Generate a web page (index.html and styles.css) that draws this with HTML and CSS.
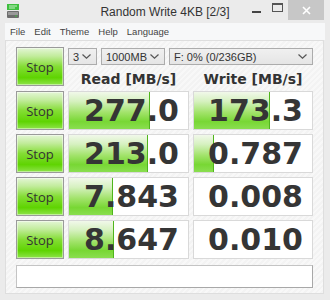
FILE: index.html
```html
<!DOCTYPE html>
<html lang="en">
<head>
    <meta charset="UTF-8">
    <title>Random Write 4KB [2/3]</title>
    <link rel="stylesheet" href="styles.css">
</head>
<body>

    <div class="window">
        <!-- Title Bar -->
        <div class="titlebar">
            <div class="title-left">
                <svg class="app-icon" width="12" height="14" viewBox="0 0 12 14">
                    <rect x="0" y="0" width="12" height="6" fill="#3fbf3f"/>
                    <rect x="2" y="1.5" width="8" height="1" fill="#c8f0c8"/>
                    <rect x="2" y="3.5" width="6" height="1" fill="#c8f0c8"/>
                    <rect x="0" y="7" width="12" height="7" rx="1" fill="#6e6e6e"/>
                    <rect x="1" y="8" width="10" height="3" fill="#9a9a9a"/>
                    <rect x="8" y="11.5" width="2" height="1" fill="#3fbf3f"/>
                </svg>
            </div>
            <div class="title">Random Write 4KB [2/3]</div>
            <div class="caption-buttons">
                <span class="cap-btn cap-min"><span class="min-bar"></span></span>
                <span class="cap-btn cap-max"><span class="max-box"></span></span>
                <span class="cap-btn cap-close">
                    <svg width="9" height="9" viewBox="0 0 9 9">
                        <path d="M1 1 L8 8 M8 1 L1 8" stroke="#fff" stroke-width="1.6"/>
                    </svg>
                </span>
            </div>
        </div>

        <!-- Menu -->
        <div class="menubar">
            <span>File</span>
            <span>Edit</span>
            <span>Theme</span>
            <span>Help</span>
            <span>Language</span>
        </div>

        <!-- Main Area -->
        <div class="client">
            <div class="top">
                <button class="stop stop-all">Stop</button>
                <div class="controls">
                    <div class="combos">
                        <div class="combo combo-count"><span>3</span><svg class="chev" width="9" height="5" viewBox="0 0 9 5"><polyline points="0.5,0.5 4.5,4.2 8.5,0.5" fill="none" stroke="#555" stroke-width="1.2"/></svg></div>
                        <div class="combo combo-size"><span>1000MB</span><svg class="chev" width="9" height="5" viewBox="0 0 9 5"><polyline points="0.5,0.5 4.5,4.2 8.5,0.5" fill="none" stroke="#555" stroke-width="1.2"/></svg></div>
                        <div class="combo combo-drive"><span>F: 0% (0/236GB)</span><svg class="chev" width="9" height="5" viewBox="0 0 9 5"><polyline points="0.5,0.5 4.5,4.2 8.5,0.5" fill="none" stroke="#555" stroke-width="1.2"/></svg></div>
                    </div>
                    <div class="headers">
                        <div class="head head-read">Read [MB/s]</div>
                        <div class="head head-write">Write [MB/s]</div>
                    </div>
                </div>
            </div>

            <div class="rows">
                <div class="row">
                    <button class="stop">Stop</button>
                    <div class="cell cell-read"><div class="fill" style="width: 68%"></div><span class="val">277.0</span></div>
                    <div class="cell cell-write"><div class="fill" style="width: 64%"></div><span class="val">173.3</span></div>
                </div>
                <div class="row">
                    <button class="stop">Stop</button>
                    <div class="cell cell-read"><div class="fill" style="width: 66%"></div><span class="val">213.0</span></div>
                    <div class="cell cell-write"><div class="fill" style="width: 17%"></div><span class="val">0.787</span></div>
                </div>
                <div class="row">
                    <button class="stop">Stop</button>
                    <div class="cell cell-read"><div class="fill" style="width: 37%"></div><span class="val">7.843</span></div>
                    <div class="cell cell-write"><span class="val">0.008</span></div>
                </div>
                <div class="row">
                    <button class="stop">Stop</button>
                    <div class="cell cell-read"><div class="fill" style="width: 38%"></div><span class="val">8.647</span></div>
                    <div class="cell cell-write"><span class="val">0.010</span></div>
                </div>
            </div>

            <div class="comment"></div>
        </div>
    </div>

</body>
</html>
```

FILE: styles.css
```css
/* Common Styles */
body {
    margin: 0;
    background-color: #ebebeb;
    font-family: 'Liberation Sans', Arial, sans-serif;
    color: #333;
}

.window {
    width: 330px;
    height: 300px;
    display: flex;
    flex-direction: column;
}

/* Title Bar */
.titlebar {
    height: 23px;
    display: grid;
    grid-template-columns: 1fr auto 1fr;
    align-items: start;
}

.title-left {
    padding: 4px 0 0 7px;
}

.app-icon {
    display: block;
}

.title {
    font-size: 12px;
    line-height: 24px;
    color: #333;
}

.caption-buttons {
    display: flex;
    justify-content: flex-end;
    padding-right: 6px;
}

.cap-btn {
    height: 20px;
    display: flex;
    align-items: center;
    justify-content: center;
}

.cap-min {
    width: 22px;
}

.min-bar {
    width: 9px;
    height: 2px;
    background-color: #444;
    margin-top: 4px;
}

.cap-max {
    width: 21px;
}

.max-box {
    width: 9px;
    height: 6px;
    border: 1px solid #555;
    border-top-width: 2px;
    margin-top: -6px;
}

.cap-close {
    width: 36px;
    background-color: #c7c7c7;
}

/* Menu Bar */
.menubar {
    height: 17px;
    margin: 0 5px;
    padding-left: 5px;
    background-color: #f7f8f9;
    display: flex;
    gap: 9px;
    font-size: 9.5px;
    line-height: 18px;
    color: #444;
}

/* Client Area */
.client {
    height: 246px;
    margin: 0 6px 0 5px;
    padding: 6px 10px 0 10px;
    border: 1px solid #dedede;
    background: repeating-linear-gradient(135deg, #f3f3f3 0 2px, #f8f8f8 2px 4px);
}

.top {
    display: flex;
    gap: 4px;
}

.controls {
    width: 245px;
}

.combos {
    display: flex;
    gap: 4px;
    margin-top: 1px;
}

.combo {
    height: 17px;
    box-sizing: border-box;
    border: 1px solid #acacac;
    background: linear-gradient(to bottom, #f0f0f0, #e5e5e5);
    display: flex;
    align-items: center;
    justify-content: space-between;
    padding: 0 5px 0 4px;
    font-size: 11px;
    color: #333;
}

.combo-count {
    width: 29px;
}

.combo-size {
    width: 64px;
}

.combo-drive {
    width: 144px;
}

.chev {
    display: block;
}

.headers {
    display: flex;
    gap: 4px;
    padding-top: 6px;
}

.head {
    font-family: 'DejaVu Sans', sans-serif;
    font-weight: bold;
    font-size: 14px;
    line-height: 17px;
    text-align: center;
    color: #333;
}

.head-read {
    width: 121px;
}

.head-write {
    width: 120px;
}

/* Stop Buttons */
.stop {
    width: 48px;
    height: 39px;
    margin: 0;
    padding: 0;
    border: 1px solid #9a9a9a;
    box-shadow: inset 0 0 0 1px rgba(255, 255, 255, 0.45);
    background: linear-gradient(to bottom, #e4f6d6 0%, #c2ec9c 22%, #84dd35 50%, #5fd402 80%, #8ee34a 100%);
    font-family: 'Open Sans', 'Noto Sans', sans-serif;
    font-size: 13px;
    color: #333;
    cursor: pointer;
}

/* Result Rows */
.rows {
    margin-top: 3px;
    display: flex;
    flex-direction: column;
    gap: 4px;
}

.row {
    display: flex;
    gap: 4px;
}

.cell {
    height: 39px;
    box-sizing: border-box;
    border: 1px solid #d9d9d9;
    background-color: #fff;
    display: grid;
}

.cell-read {
    width: 121px;
}

.cell-write {
    width: 120px;
}

.fill {
    grid-area: 1 / 1;
    box-sizing: border-box;
    border-right: 1px solid #4fb51c;
    background: linear-gradient(to bottom, #f1f8ea 0%, #d6f1c0 25%, #a2e36b 55%, #78d734 80%, #8ade50 100%);
}

.val {
    grid-area: 1 / 1;
    justify-self: end;
    align-self: center;
    padding-right: 9px;
    font-family: 'DejaVu Sans', sans-serif;
    font-weight: bold;
    font-size: 30px;
    line-height: 37px;
    color: #353535;
}

/* Comment Box */
.comment {
    height: 23px;
    margin-top: 6px;
    box-sizing: border-box;
    border: 1px solid #c4c4c4;
    border-right-color: #a8a8a8;
    border-bottom-color: #a8a8a8;
    background-color: #fff;
}
```
